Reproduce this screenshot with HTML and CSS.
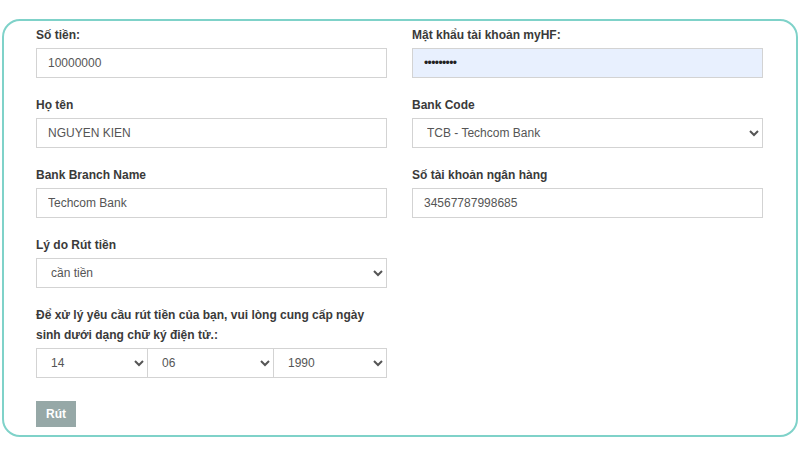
FILE: index.html
```html
<!DOCTYPE html>
<html lang="vi">
<head>
<meta charset="utf-8">
<title>Rút tiền</title>
<link rel="stylesheet" href="styles.css">
</head>
<body>
<form class="card">
  <div class="grid">
    <div class="group">
      <label class="label">Số tiền:</label>
      <input class="field" type="text" value="10000000">
    </div>
    <div class="group">
      <label class="label">Mật khẩu tài khoản myHF:</label>
      <input class="field field-autofill" type="password" value="123456789">
    </div>
    <div class="group">
      <label class="label">Họ tên</label>
      <input class="field" type="text" value="NGUYEN KIEN">
    </div>
    <div class="group">
      <label class="label">Bank Code</label>
      <select class="field select"><option>TCB - Techcom Bank</option></select>
    </div>
    <div class="group">
      <label class="label">Bank Branch Name</label>
      <input class="field" type="text" value="Techcom Bank">
    </div>
    <div class="group">
      <label class="label">Số tài khoản ngân hàng</label>
      <input class="field" type="text" value="34567787998685">
    </div>
    <div class="group">
      <label class="label">Lý do Rút tiền</label>
      <select class="field select"><option>cần tiền</option></select>
    </div>
    <div class="group empty"></div>
    <div class="group">
      <label class="label">Để xử lý yêu cầu rút tiền của bạn, vui lòng cung cấp ngày sinh dưới dạng chữ ký điện tử.:</label>
      <div class="dates">
        <select class="field select"><option>14</option></select>
        <select class="field select"><option>06</option></select>
        <select class="field select"><option>1990</option></select>
      </div>
    </div>
  </div>
  <button type="button" class="btn">Rút</button>
</form>
</body>
</html>
```
FILE: styles.css
```css
html, body {
  margin: 0;
  padding: 0;
  background: #ffffff;
}
body {
  font-family: "Liberation Sans", Arial, sans-serif;
  color: #333333;
  padding-top: 19px;
  padding-left: 2px;
}
.card {
  box-sizing: border-box;
  width: 796px;
  height: 418px;
  border: 2px solid #7fd2c9;
  border-radius: 18px;
  padding: 3px 32px 0 32px;
  display: flex;
  flex-direction: column;
  align-items: flex-start;
}
.grid {
  display: grid;
  grid-template-columns: 351px 351px;
  column-gap: 25px;
  width: 100%;
}
.group {
  display: flex;
  flex-direction: column;
  margin-bottom: 16px;
}
.label {
  font-size: 12px;
  font-weight: bold;
  line-height: 20px;
  color: #3a3a3a;
  padding-top: 1px;
  margin-bottom: 3px;
}
.field {
  box-sizing: border-box;
  height: 30px;
  width: 100%;
  border: 1px solid #d3d3d3;
  border-radius: 0;
  background: #ffffff;
  font-family: "Liberation Sans", Arial, sans-serif;
  font-size: 12px;
  color: #555555;
  padding: 0 11px;
  margin: 0;
  outline: none;
}
.field-autofill {
  background: #e8f0fe;
  color: #222222;
  letter-spacing: -0.6px;
}
.select {
  padding-left: 10px;
}
.dates {
  display: grid;
  grid-template-columns: 112px 126px 1fr;
}
.dates .select + .select {
  border-left: none;
}
.btn {
  margin-top: 7px;
  box-sizing: border-box;
  width: 40px;
  height: 26px;
  border: none;
  background: #96a8a7;
  color: #ffffff;
  font-family: "Liberation Sans", Arial, sans-serif;
  font-weight: bold;
  font-size: 12px;
  padding: 0;
  cursor: pointer;
}
```
